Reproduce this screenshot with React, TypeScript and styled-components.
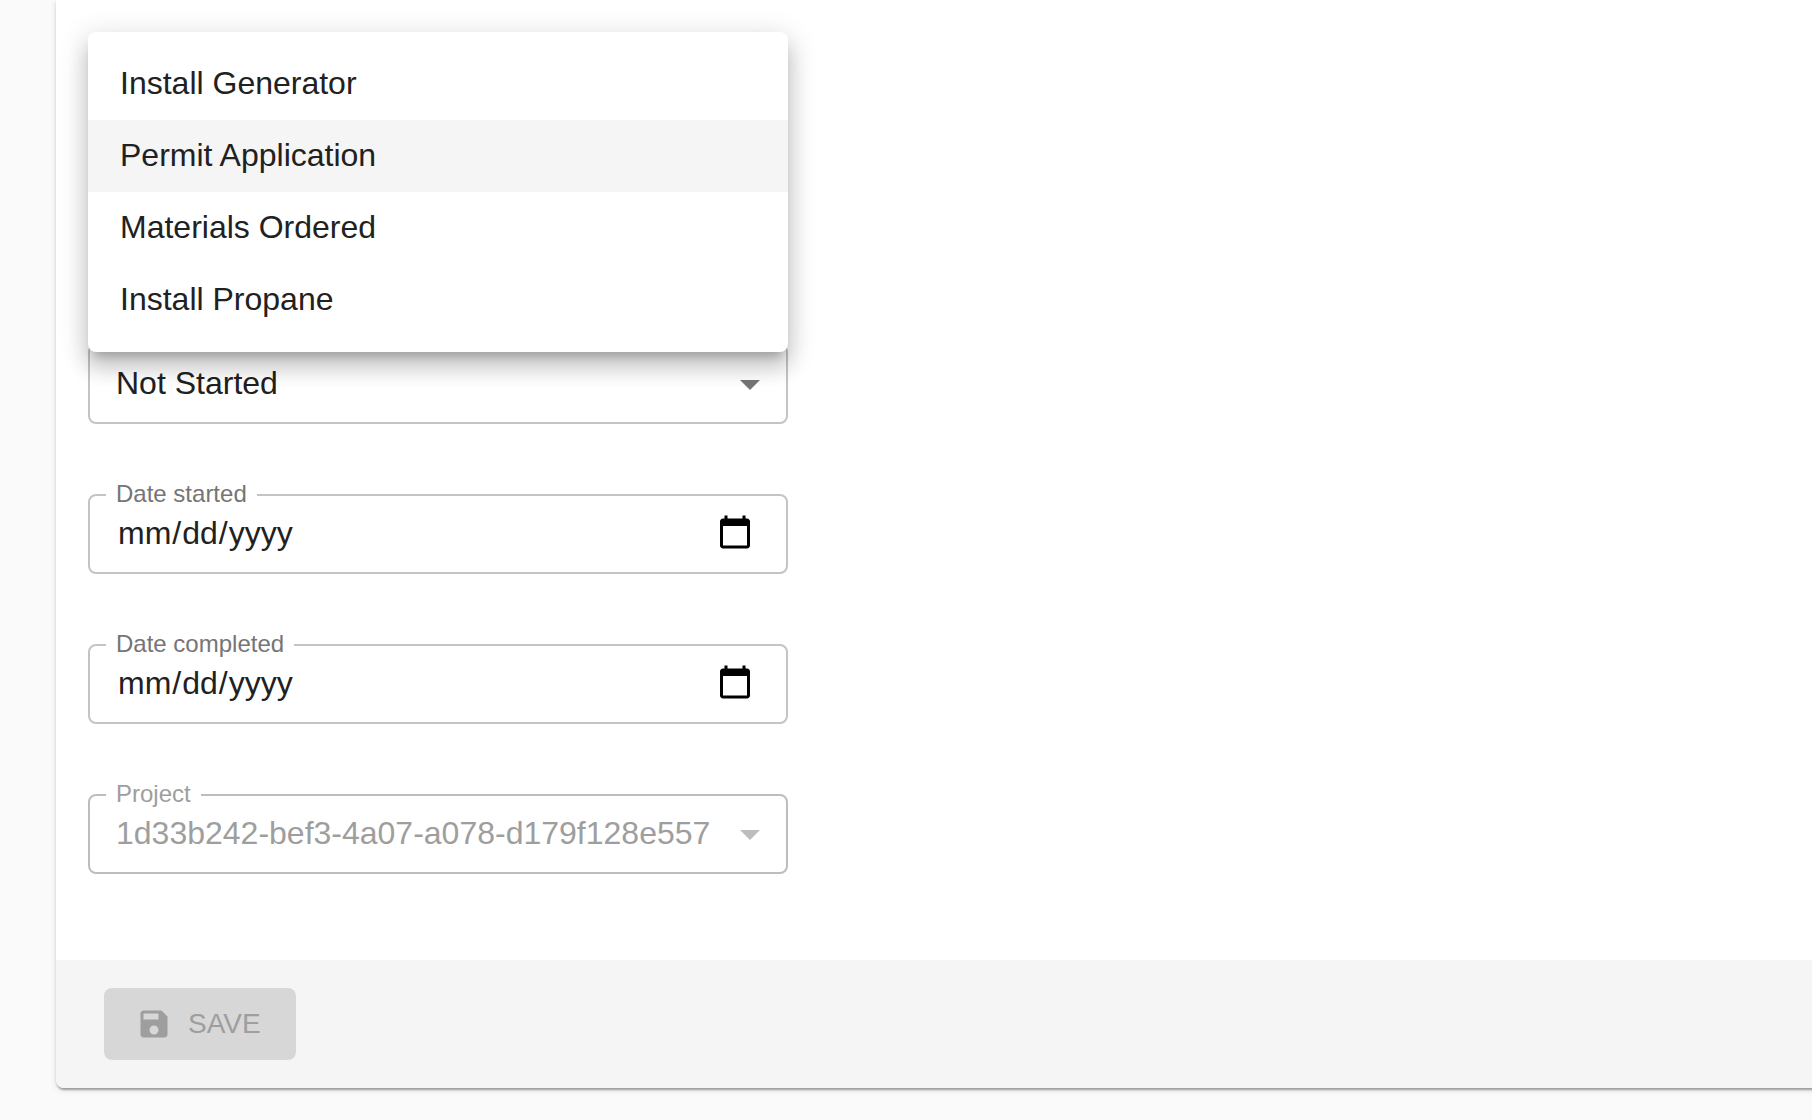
import React, { useState } from "react";
import styled, { createGlobalStyle } from "styled-components";

const GlobalStyle = createGlobalStyle`
  *, *::before, *::after { box-sizing: border-box; }
  body {
    margin: 0;
    background: #fafafa;
    color: #212121;
    font-family: "Liberation Sans", Helvetica, Arial, sans-serif;
    font-size: 32px;
    overflow-x: hidden;
  }
`;

const Page = styled.main`
  padding: 0 0 32px 56px;
`;

const Card = styled.form`
  margin-right: -8px;
  background: #fff;
  border-radius: 0 0 0 8px;
  box-shadow:
    0 4px 2px -2px rgba(0, 0, 0, 0.2),
    0 2px 2px 0 rgba(0, 0, 0, 0.14),
    0 2px 6px 0 rgba(0, 0, 0, 0.12);
`;

const Content = styled.div`
  display: flex;
  flex-direction: column;
  align-items: flex-start;
  padding: 32px 32px 86px;
`;

const Menu = styled.div`
  position: relative;
  z-index: 1;
  display: flex;
  flex-direction: column;
  width: 700px;
  max-width: 100%;
  padding: 16px 0;
  background: #fff;
  border-radius: 8px;
  box-shadow:
    0 10px 10px -6px rgba(0, 0, 0, 0.2),
    0 16px 20px 2px rgba(0, 0, 0, 0.14),
    0 6px 28px 4px rgba(0, 0, 0, 0.12);
`;

const MenuItem = styled.button<{ $active: boolean }>`
  height: 72px;
  padding: 0 32px 2px;
  border: 0;
  background: ${(p) => (p.$active ? "#f5f5f5" : "transparent")};
  color: inherit;
  font: inherit;
  text-align: left;
  cursor: pointer;
`;

const Fields = styled.div`
  display: flex;
  flex-direction: column;
  gap: 70px;
  width: 700px;
  max-width: 100%;
  margin-top: -8px;
`;

const Field = styled.div<{ $disabled?: boolean }>`
  position: relative;
  display: flex;
  height: 80px;
  border: 2px solid ${(p) => (p.$disabled ? "#bdbdbd" : "#c4c4c4")};
  border-radius: 8px;
  color: ${(p) => (p.$disabled ? "#9e9e9e" : "#757575")};
`;

const Label = styled.label`
  position: absolute;
  top: -16px;
  left: 16px;
  padding: 0 10px;
  background: #fff;
  font-size: 24px;
  line-height: 28px;
`;

const Select = styled.select`
  appearance: none;
  flex: 1;
  min-width: 0;
  padding: 0 64px 2px 26px;
  border: 0;
  background: transparent;
  color: #212121;
  font: inherit;
  font-size: 32px;
  opacity: 1;

  &:disabled {
    color: #9e9e9e;
  }
`;

const Arrow = styled.svg<{ $disabled?: boolean }>`
  position: absolute;
  top: 14px;
  right: 12px;
  width: 48px;
  height: 48px;
  fill: ${(p) => (p.$disabled ? "#bdbdbd" : "#757575")};
  pointer-events: none;
`;

const DateInput = styled.input`
  flex: 1;
  min-width: 0;
  padding: 0 32px 2px 27px;
  border: 0;
  background: transparent;
  color: #212121;
  font: inherit;
  font-size: 32px;

  &::-webkit-calendar-picker-indicator {
    width: 38px;
    height: 38px;
    padding: 0;
  }
`;

const Toolbar = styled.footer`
  display: flex;
  align-items: center;
  min-height: 128px;
  padding: 0 48px;
  background: #f5f5f5;
  border-radius: 0 0 0 8px;
`;

const SaveButton = styled.button`
  display: flex;
  align-items: center;
  gap: 16px;
  min-width: 192px;
  height: 72px;
  padding: 0 32px;
  border: 0;
  border-radius: 8px;
  background: #d7d7d7;
  color: #9e9e9e;
  font: inherit;
  font-size: 28px;

  svg {
    width: 36px;
    height: 36px;
    fill: currentColor;
  }
`;

const tasks = ["Install Generator", "Permit Application", "Materials Ordered", "Install Propane"];

function SelectField({ id, label, value, disabled }: { id: string; label: string; value: string; disabled?: boolean }) {
  return (
    <Field $disabled={disabled}>
      <Label htmlFor={id}>{label}</Label>
      <Select id={id} disabled={disabled} defaultValue={value}>
        <option>{value}</option>
      </Select>
      <Arrow $disabled={disabled} viewBox="0 0 24 24" aria-hidden="true">
        <path d="M7 10l5 5 5-5z" />
      </Arrow>
    </Field>
  );
}

function DateField({ id, label }: { id: string; label: string }) {
  return (
    <Field>
      <Label htmlFor={id}>{label}</Label>
      <DateInput id={id} type="date" />
    </Field>
  );
}

export default function App() {
  const [task, setTask] = useState("Permit Application");

  return (
    <>
      <GlobalStyle />
      <Page>
        <Card onSubmit={(e) => e.preventDefault()}>
          <Content>
            <Menu role="listbox">
              {tasks.map((name) => (
                <MenuItem
                  key={name}
                  type="button"
                  role="option"
                  aria-selected={name === task}
                  $active={name === task}
                  onClick={() => setTask(name)}
                >
                  {name}
                </MenuItem>
              ))}
            </Menu>
            <Fields>
              <SelectField id="status" label="Status" value="Not Started" />
              <DateField id="date-started" label="Date started" />
              <DateField id="date-completed" label="Date completed" />
              <SelectField id="project" label="Project" value="1d33b242-bef3-4a07-a078-d179f128e557" disabled />
            </Fields>
          </Content>
          <Toolbar>
            <SaveButton type="submit" disabled>
              <svg viewBox="0 0 24 24" aria-hidden="true">
                <path d="M17 3H5c-1.11 0-2 .9-2 2v14c0 1.1.89 2 2 2h14c1.1 0 2-.9 2-2V7l-4-4zm-5 16c-1.66 0-3-1.34-3-3s1.34-3 3-3 3 1.34 3 3-1.34 3-3 3zm3-10H5V5h10v4z" />
              </svg>
              SAVE
            </SaveButton>
          </Toolbar>
        </Card>
      </Page>
    </>
  );
}
